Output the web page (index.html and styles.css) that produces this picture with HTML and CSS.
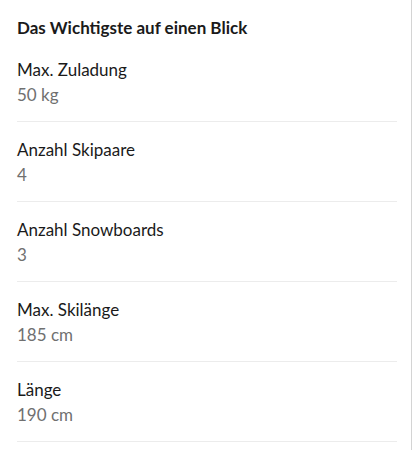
FILE: index.html
```html
<!DOCTYPE html>
<html lang="de">
<head>
    <meta charset="UTF-8">
    <meta name="viewport" content="width=device-width, initial-scale=1.0">
    <title>Das Wichtigste auf einen Blick</title>
    <link rel="stylesheet" href="styles.css">
</head>
<body>
    <div class="panel">
        <h2 class="title">Das Wichtigste auf einen Blick</h2>
        <ul class="facts">
            <li class="fact">
                <div class="fact-label">Max. Zuladung</div>
                <div class="fact-value">50 kg</div>
            </li>
            <li class="fact">
                <div class="fact-label">Anzahl Skipaare</div>
                <div class="fact-value">4</div>
            </li>
            <li class="fact">
                <div class="fact-label">Anzahl Snowboards</div>
                <div class="fact-value">3</div>
            </li>
            <li class="fact">
                <div class="fact-label">Max. Skilänge</div>
                <div class="fact-value">185 cm</div>
            </li>
            <li class="fact">
                <div class="fact-label">Länge</div>
                <div class="fact-value">190 cm</div>
            </li>
        </ul>
    </div>
</body>
</html>
```

FILE: styles.css
```css
body {
    margin: 0;
    font-family: Lato, "Noto Sans", sans-serif;
    color: #1a1a1a;
    background: #fff;
}
.panel {
    width: 412px;
    min-height: 450px;
    border-right: 1px solid #d4d4d4;
    padding: 0 14px 0 17px;
    box-sizing: border-box;
}
.title {
    margin: 0;
    padding-top: 16px;
    font-size: 17px;
    line-height: 24px;
    font-weight: 700;
}
.facts {
    list-style: none;
    margin: 0;
    padding: 0;
}
.fact {
    padding: 16px 0 14px;
    border-bottom: 1px solid #ececec;
}
.fact:first-child {
    padding-top: 18px;
}
.fact-label {
    font-size: 17px;
    line-height: 24px;
}
.fact-value {
    margin-top: 1px;
    font-size: 17px;
    line-height: 24px;
    color: #707070;
}
```
